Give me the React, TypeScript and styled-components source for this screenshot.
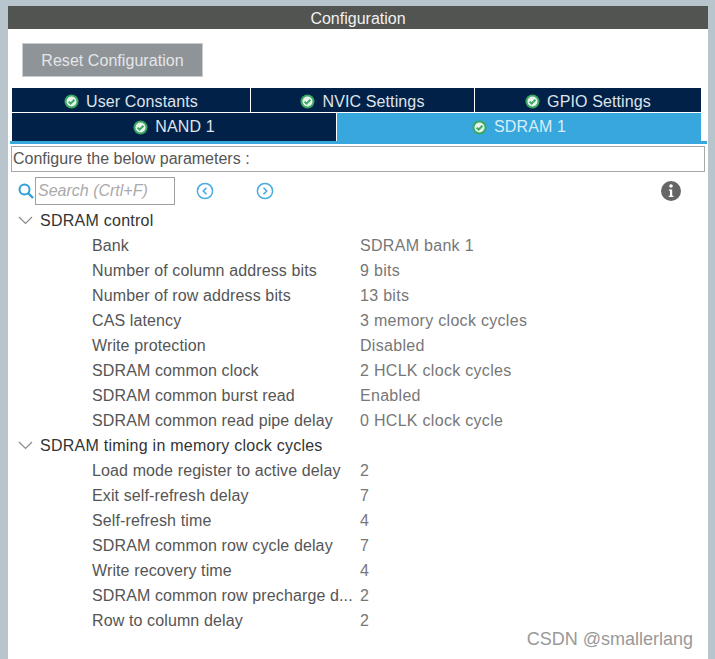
import React from "react";
import styled, { createGlobalStyle } from "styled-components";

const GlobalStyle = createGlobalStyle`
   html, body {
      margin: 0;
      padding: 0;
      background: #b8c5cc;
      overflow: hidden;
   }
`;

const Page = styled.div`
   width: 715px;
   height: 659px;
   padding: 6px 7px 0 8px;
   box-sizing: border-box;
   font-family: "Liberation Sans", Arial, sans-serif;
`;

const Panel = styled.div`
   height: 653px;
   background: #fff;
   display: flex;
   flex-direction: column;
   position: relative;
`;

const TitleBar = styled.div`
   height: 23px;
   background: #525452;
   color: #f1f1f1;
   font-size: 16px;
   line-height: 25px;
   text-align: center;
`;

const ResetButton = styled.button`
   width: 181px;
   height: 34px;
   margin: 14px 0 11px 14px;
   padding: 1px 0 0;
   border: 1px solid #c8ccd0;
   background: #8f9499;
   color: #e4e6e8;
   font-family: inherit;
   font-size: 16px;
   letter-spacing: 0.05px;
`;

const TabRow = styled.div<{ $height: number; $cols: string }>`
   display: grid;
   grid-template-columns: ${(p) => p.$cols};
   column-gap: 1px;
   height: ${(p) => p.$height}px;
   margin: 0 7px 1px 4px;
`;

const Tab = styled.div<{ $active?: boolean; $drop?: number }>`
   display: flex;
   align-items: center;
   justify-content: center;
   gap: 7px;
   padding-top: ${(p) => p.$drop ?? 0}px;
   background: ${(p) => (p.$active ? "#38a7dd" : "#022149")};
   color: ${(p) => (p.$active ? "#d6eefa" : "#dfe4ea")};
   font-size: 16px;
   letter-spacing: 0.12px;
`;

const BlueLine = styled.div`
   height: 3px;
   margin: -1px 1px 0 2px;
   background: #38a7dd;
`;

const ParamsHint = styled.div`
   height: 24px;
   margin: 2px 3px 0 3px;
   padding-left: 1px;
   border: 1px solid #a8a8a8;
   color: #555;
   font-size: 16px;
   line-height: 24px;
`;

const SearchRow = styled.div`
   display: flex;
   align-items: center;
   height: 28px;
   margin-top: 5px;
   padding-left: 9px;
`;

const SearchBox = styled.div`
   width: 136px;
   height: 26px;
   padding-left: 2px;
   border: 1px solid #a0a0a0;
   color: #aaa;
   font-size: 16px;
   font-style: italic;
   line-height: 26px;
`;

const NavIcon = styled.svg<{ $gap: number }>`
   margin-left: ${(p) => p.$gap}px;
`;

const InfoIcon = styled.svg`
   margin-left: auto;
   margin-right: 27px;
`;

const Tree = styled.div`
   margin-top: 3px;
`;

const GroupRow = styled.div`
   display: flex;
   align-items: center;
   height: 25px;
   padding-left: 10px;
   color: #333;
   font-size: 16px;
   letter-spacing: 0.25px;
`;

const Chevron = styled.svg`
   margin-right: 7px;
`;

const ParamRow = styled.div`
   display: grid;
   grid-template-columns: 268px 1fr;
   height: 25px;
   padding-left: 84px;
   font-size: 16px;
   line-height: 25px;
   letter-spacing: 0.12px;
`;

const ParamName = styled.div`
   color: #555;
   white-space: nowrap;
`;

const ParamValue = styled.div`
   color: #777;
   letter-spacing: 0.3px;
`;

const Watermark = styled.div`
   position: absolute;
   right: 15px;
   bottom: 9px;
   color: #999;
   font-size: 18px;
`;

const CheckIcon = () => (
   <svg width="15" height="15" viewBox="0 0 15 15">
      <circle cx="7.5" cy="7.5" r="7" fill="#39a860" />
      <circle cx="7.5" cy="7.5" r="5" fill="#e8f3ec" />
      <path d="M4.6 7.6l2 2 3.8-3.8" fill="none" stroke="#39a860" strokeWidth="2" />
   </svg>
);

const Circle = ({ d, gap }: { d: string; gap: number }) => (
   <NavIcon $gap={gap} width="18" height="18" viewBox="0 0 18 18">
      <circle cx="9" cy="9" r="7.6" fill="none" stroke="#49acdf" strokeWidth="1.5" />
      <path d={d} fill="none" stroke="#49acdf" strokeWidth="1.6" />
   </NavIcon>
);

const groups = [
   {
      name: "SDRAM control",
      params: [
         ["Bank", "SDRAM bank 1"],
         ["Number of column address bits", "9 bits"],
         ["Number of row address bits", "13 bits"],
         ["CAS latency", "3 memory clock cycles"],
         ["Write protection", "Disabled"],
         ["SDRAM common clock", "2 HCLK clock cycles"],
         ["SDRAM common burst read", "Enabled"],
         ["SDRAM common read pipe delay", "0 HCLK clock cycle"],
      ],
   },
   {
      name: "SDRAM timing in memory clock cycles",
      params: [
         ["Load mode register to active delay", "2"],
         ["Exit self-refresh delay", "7"],
         ["Self-refresh time", "4"],
         ["SDRAM common row cycle delay", "7"],
         ["Write recovery time", "4"],
         ["SDRAM common row precharge d...", "2"],
         ["Row to column delay", "2"],
      ],
   },
];

export default function App() {
   return (
      <Page>
         <GlobalStyle />
         <Panel>
            <TitleBar>Configuration</TitleBar>
            <ResetButton>Reset Configuration</ResetButton>
            <TabRow $height={24} $cols="238px 223px 1fr">
               <Tab $drop={3}><CheckIcon />User Constants</Tab>
               <Tab $drop={3}><CheckIcon />NVIC Settings</Tab>
               <Tab $drop={3}><CheckIcon />GPIO Settings</Tab>
            </TabRow>
            <TabRow $height={28} $cols="324px 1fr">
               <Tab><CheckIcon />NAND 1</Tab>
               <Tab $active><CheckIcon />SDRAM 1</Tab>
            </TabRow>
            <BlueLine />
            <ParamsHint>Configure the below parameters :</ParamsHint>
            <SearchRow>
               <svg width="18" height="18" viewBox="0 0 18 18">
                  <circle cx="7.5" cy="7.5" r="5" fill="none" stroke="#2f9fd8" strokeWidth="2" />
                  <path d="M11 11l5 5" stroke="#2f9fd8" strokeWidth="2.4" />
               </svg>
               <SearchBox>Search (Crtl+F)</SearchBox>
               <Circle gap={21} d="M10.5 5.8L7.3 9l3.2 3.2" />
               <Circle gap={42} d="M7.5 5.8L10.7 9l-3.2 3.2" />
               <InfoIcon width="20" height="20" viewBox="0 0 20 20">
                  <circle cx="10" cy="10" r="10" fill="#666" />
                  <circle cx="10" cy="5" r="1.8" fill="#fff" />
                  <path d="M8 8.5h3.2v6.2H12.4v1.3H7.8v-1.3h1.2V9.8H8z" fill="#fff" />
               </InfoIcon>
            </SearchRow>
            <Tree>
               {groups.map((g) => (
                  <React.Fragment key={g.name}>
                     <GroupRow>
                        <Chevron width="15" height="9" viewBox="0 0 15 9">
                           <path d="M1 1l6.5 6.5L14 1" fill="none" stroke="#8a8a8a" strokeWidth="1.2" />
                        </Chevron>
                        {g.name}
                     </GroupRow>
                     {g.params.map(([name, value]) => (
                        <ParamRow key={name}>
                           <ParamName>{name}</ParamName>
                           <ParamValue>{value}</ParamValue>
                        </ParamRow>
                     ))}
                  </React.Fragment>
               ))}
            </Tree>
            <Watermark>CSDN @smallerlang</Watermark>
         </Panel>
      </Page>
   );
}
